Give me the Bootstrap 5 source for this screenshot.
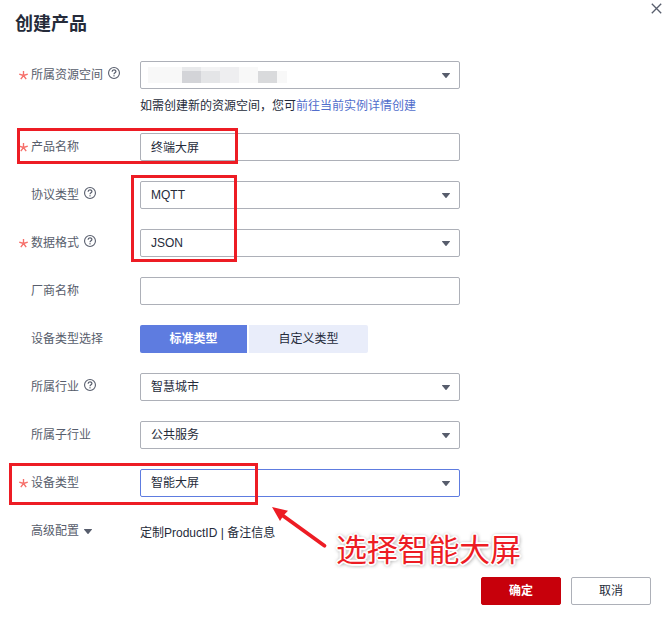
<!DOCTYPE html>
<html lang="zh-CN">
<head>
<meta charset="utf-8">
<meta name="viewport" content="width=device-width, initial-scale=1">
<title>创建产品</title>
<link rel="stylesheet" href="https://cdn.jsdelivr.net/npm/bootstrap@5.3.0/dist/css/bootstrap.min.css">
<style>
body{font-family:"Liberation Sans","Noto Sans CJK SC",sans-serif;font-size:12px;line-height:18px;color:#252b3a;background:#fff}
.dialog{width:672px;height:631px;overflow:hidden}
.dialog-head{height:61px;padding:12px 9px 0 15px}
.dialog-title{font-size:18px;line-height:24px;font-weight:700;color:#252b3a}
.close-x{width:13px;height:13px;margin-top:-10px}
.form-line{height:48px}
.form-line.tall{height:72px}
.line-label{width:140px;height:28px;padding-left:18px;color:#575d6c;line-height:28px}
.star{width:13px;flex:none;height:26px}
.star svg{display:block;margin:10px 0 0 1px}
.help{width:12px;height:12px;margin:6px 0 0 5px;flex:none}
.field{width:320px;height:28px;border:1px solid #adb0b8;border-radius:2px;padding:0 9px 0 10px;background:#fff;line-height:26px}
.field.entry{line-height:28px}
.field.active{border-color:#5e7ce0}
.caret{width:8px;height:5px;flex:none}
.label-caret{margin:12px 0 0 5px}
.masked{padding-left:7px}
.hint{margin-top:8px;line-height:18px}
.hint a{color:#526ecc}
.segments{gap:2px}
.seg{height:28px;line-height:26px;font-size:12px;padding:0;border:0;border-radius:2px 0 0 2px}
.seg-on,.seg-on:hover{width:107px;background:#5e7ce0;color:#fff;font-weight:700}
.seg-off{width:119px;background:#e9edfa;color:#252b3a;border-radius:0 2px 2px 0}
.extra{padding-top:7px}
.actions{gap:10px;padding:12px 21px 0 0}
.act{width:80px;height:28px;padding:0;font-size:12px;line-height:26px;border-radius:2px}
.act-ok{background:#c7000b;color:#fff;border:1px solid #c7000b;font-weight:700}
.act-no{background:#fff;color:#252b3a;border:1px solid #adb0b8}
.frame{border:3px solid #ed1c24;pointer-events:none}
.frame-name{left:17px;top:128px;width:221px;height:36px}
.frame-format{left:131px;top:175px;width:106px;height:87px}
.frame-device{left:9px;top:463px;width:249px;height:42px}
.arrow{left:268px;top:502px}
.note{left:336px;top:531px;font-size:31px;line-height:40px;letter-spacing:-.2px;color:#ed1c24;white-space:nowrap;text-shadow:0 0 1px #fff,1px 1px 0 #fff,-1px -1px 0 #fff,1px -1px 0 #fff,-1px 1px 0 #fff,2px 0 1px #fff,-2px 0 1px #fff,0 2px 1px #fff,0 -2px 1px #fff,0 0 4px #777,1px 1px 4px #888}
</style>
</head>
<body>
<svg width="0" height="0" class="position-absolute" aria-hidden="true">
<symbol id="q" viewBox="0 0 12 12"><circle cx="6" cy="6" r="5.45" fill="none" stroke="#575d6c" stroke-width="1.1"/><path d="M4.1 4.8C4.1 2.2 7.9 2.3 7.9 4.5C7.9 5.8 6 5.8 6 7.3" fill="none" stroke="#575d6c" stroke-width="1.2"/><rect x="5.4" y="8.2" width="1.2" height="1.2" fill="#575d6c"/></symbol>
<symbol id="c" viewBox="0 0 8 5"><path d="M.3 0H7.7Q8.2.3 7.8.8L4.5 4.7Q4 5.2 3.5 4.7L.2.8Q-.2.3.3 0Z" fill="#575d6c"/></symbol>
<symbol id="s" viewBox="0 0 8 8"><path d="M4 4V0M4 4L.2 2.8M4 4L7.8 2.8M4 4L1.6 7.3M4 4L6.4 7.3" stroke="#f66f6a" stroke-width="1.2" fill="none"/></symbol>
</svg>
<main class="dialog position-relative">
<header class="dialog-head d-flex justify-content-between align-items-start">
<h1 class="dialog-title m-0">创建产品</h1>
<svg class="close-x" viewBox="0 0 13 13"><path d="M1.8 1.8L11.2 11.2M11.2 1.8L1.8 11.2" stroke="#575d6c" stroke-width="1.3"/></svg>
</header>
<div class="form-line tall d-flex">
<div class="line-label d-flex"><span class="star"><svg width="9" height="9"><use href="#s"/></svg></span>所属资源空间<svg class="help"><use href="#q"/></svg></div>
<div>
<div class="field masked d-flex align-items-center justify-content-between"><svg width="139" height="16" shape-rendering="crispEdges"><path fill="#f8f8f8" d="M0 0H139V16H0Z"/><path fill="#e8e9eb" d="M34 0H53V4H34Z"/><path fill="#d3d4d8" d="M34 4H53V16H34Z"/><path fill="#e4e5e7" d="M53 4H72V16H53Z"/><path fill="#f3f3f4" d="M53 0H72V4H53Z"/><path fill="#eeeef0" d="M72 0H91V16H72Z"/><path fill="#d9dadc" d="M110 4H129V16H110Z"/><path fill="#fff" d="M110 0H139V4H110Z"/></svg><svg class="caret"><use href="#c"/></svg></div>
<div class="hint">如需创建新的资源空间，您可<a class="text-decoration-none" href="#">前往当前实例详情创建</a></div>
</div>
</div>
<div class="form-line d-flex"><div class="line-label d-flex"><span class="star"><svg width="9" height="9"><use href="#s"/></svg></span>产品名称</div><div class="field entry">终端大屏</div></div>
<div class="form-line d-flex"><div class="line-label d-flex"><span class="star"></span>协议类型<svg class="help"><use href="#q"/></svg></div><div class="field d-flex align-items-center justify-content-between">MQTT<svg class="caret"><use href="#c"/></svg></div></div>
<div class="form-line d-flex"><div class="line-label d-flex"><span class="star"><svg width="9" height="9"><use href="#s"/></svg></span>数据格式<svg class="help"><use href="#q"/></svg></div><div class="field d-flex align-items-center justify-content-between">JSON<svg class="caret"><use href="#c"/></svg></div></div>
<div class="form-line d-flex"><div class="line-label d-flex"><span class="star"></span>厂商名称</div><div class="field"></div></div>
<div class="form-line d-flex"><div class="line-label d-flex"><span class="star"></span>设备类型选择</div><div class="segments d-flex align-items-start"><button class="btn seg seg-on">标准类型</button><button class="btn seg seg-off">自定义类型</button></div></div>
<div class="form-line d-flex"><div class="line-label d-flex"><span class="star"></span>所属行业<svg class="help"><use href="#q"/></svg></div><div class="field d-flex align-items-center justify-content-between">智慧城市<svg class="caret"><use href="#c"/></svg></div></div>
<div class="form-line d-flex"><div class="line-label d-flex"><span class="star"></span>所属子行业</div><div class="field d-flex align-items-center justify-content-between">公共服务<svg class="caret"><use href="#c"/></svg></div></div>
<div class="form-line d-flex"><div class="line-label d-flex"><span class="star"><svg width="9" height="9"><use href="#s"/></svg></span>设备类型</div><div class="field active d-flex align-items-center justify-content-between">智能大屏<svg class="caret"><use href="#c"/></svg></div></div>
<div class="form-line d-flex"><div class="line-label d-flex"><span class="star"></span>高级配置<svg class="caret label-caret"><use href="#c"/></svg></div><div class="extra">定制ProductID | 备注信息</div></div>
<footer class="actions d-flex justify-content-end"><button class="btn act act-ok">确定</button><button class="btn act act-no">取消</button></footer>
<div class="frame frame-name position-absolute"></div>
<div class="frame frame-format position-absolute"></div>
<div class="frame frame-device position-absolute"></div>
<svg class="arrow position-absolute" width="62" height="50"><path d="M56.5 43.7L14 13" stroke="#ed1c24" stroke-width="3.8" stroke-linecap="round"/><path d="M4 5L20 8.8L15.5 13.5L12 19Z" fill="#ed1c24"/></svg>
<div class="note position-absolute">选择智能大屏</div>
</main>
<script src="https://cdn.jsdelivr.net/npm/bootstrap@5.3.0/dist/js/bootstrap.bundle.min.js"></script>
</body>
</html>
